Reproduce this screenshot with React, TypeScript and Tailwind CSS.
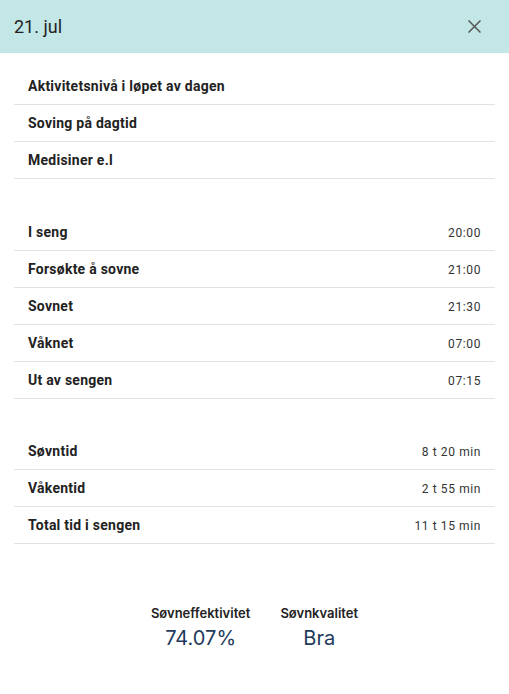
import React from 'react';

interface Row {
  label: string;
  value?: string;
}

const notes: Row[] = [
  { label: 'Aktivitetsnivå i løpet av dagen' },
  { label: 'Soving på dagtid' },
  { label: 'Medisiner e.l' },
];

const times: Row[] = [
  { label: 'I seng', value: '20:00' },
  { label: 'Forsøkte å sovne', value: '21:00' },
  { label: 'Sovnet', value: '21:30' },
  { label: 'Våknet', value: '07:00' },
  { label: 'Ut av sengen', value: '07:15' },
];

const totals: Row[] = [
  { label: 'Søvntid', value: '8 t 20 min' },
  { label: 'Våkentid', value: '2 t 55 min' },
  { label: 'Total tid i sengen', value: '11 t 15 min' },
];

const RowList: React.FC<{ rows: Row[]; className?: string }> = ({ rows, className }) => (
  <div className={`mx-[14px] ${className ?? ''}`}>
    {rows.map((r) => (
      <div
        key={r.label}
        className="h-[37px] flex items-center justify-between pt-[1px] px-[14px] border-b border-[#e2e2e2]"
      >
        <span className="text-[14px] font-bold tracking-[0.25px] text-[#222]">{r.label}</span>
        {r.value && <span className="text-[12px] tracking-[0.6px] text-[#333]">{r.value}</span>}
      </div>
    ))}
  </div>
);

export default function App() {
  return (
    <div className="w-[509px] h-[694px] bg-white font-['Roboto',sans-serif]">
      <div className="h-[53px] bg-[#c3e7e6] flex items-center justify-between pl-[14px] pr-[28px]">
        <h1 className="text-[18px] text-[#222]">21. jul</h1>
        <button className="text-[#555]" aria-label="Lukk">
          <svg width="13" height="13" viewBox="0 0 13 13" stroke="currentColor" strokeWidth="1.5">
            <path d="M0.5 0.5l12 12M12.5 0.5l-12 12" />
          </svg>
        </button>
      </div>

      <div className="pt-[15px] flex flex-col">
        <RowList rows={notes} />
        <RowList rows={times} className="mt-[35px]" />
        <RowList rows={totals} className="mt-[34px]" />
      </div>

      <div className="mt-[60px] flex justify-center gap-[30px] font-['Inter',sans-serif]">
        <div className="flex flex-col items-center">
          <span className="text-[13px] leading-[18px] font-semibold text-[#222]">Søvneffektivitet</span>
          <span className="mt-[2px] text-[20px] leading-[28px] text-[#1e3a5c]">74.07%</span>
        </div>
        <div className="flex flex-col items-center">
          <span className="text-[13px] leading-[18px] font-semibold text-[#222]">Søvnkvalitet</span>
          <span className="mt-[2px] text-[20px] leading-[28px] text-[#1e3a5c]">Bra</span>
        </div>
      </div>
    </div>
  );
}
